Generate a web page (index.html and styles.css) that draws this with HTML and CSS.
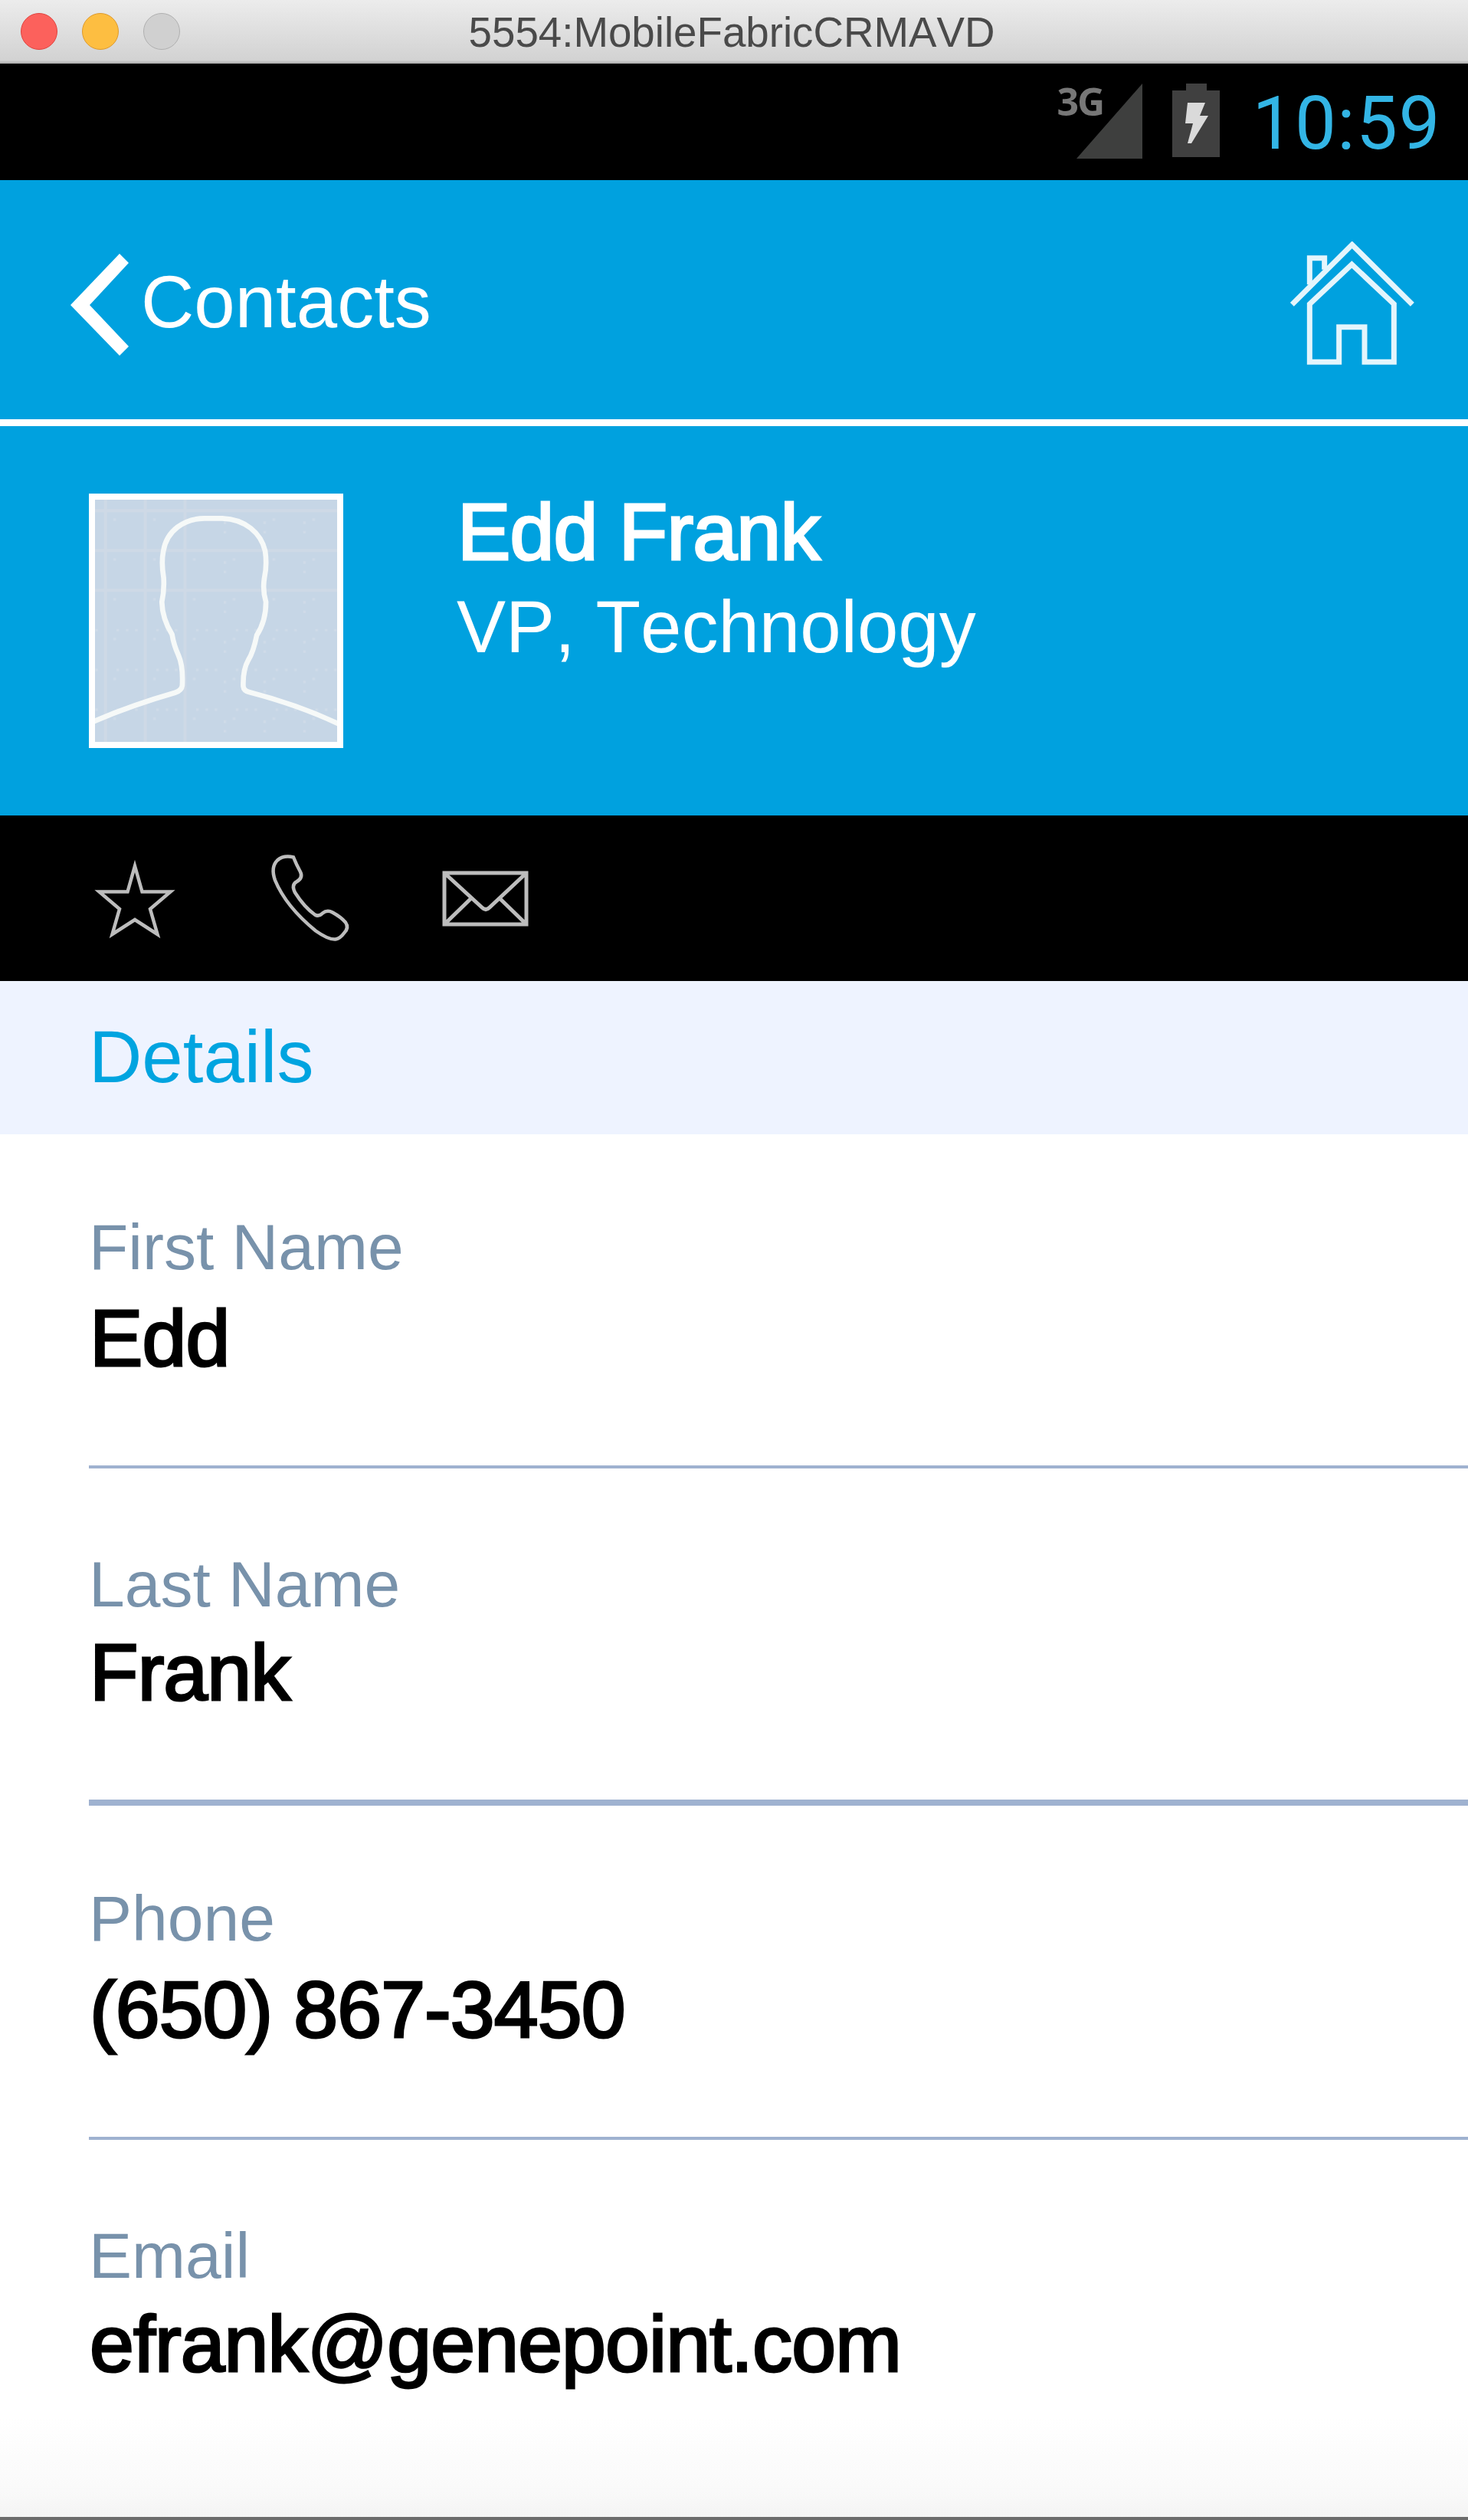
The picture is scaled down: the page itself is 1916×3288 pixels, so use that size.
FILE: index.html
```html
<!DOCTYPE html>
<html lang="en">
<head>
<meta charset="utf-8">
<title>Contacts</title>
<link rel="stylesheet" href="styles.css">
</head>
<body>
<div class="window">
  <header class="titlebar">
    <div class="lights">
      <span class="light close"></span>
      <span class="light minimize"></span>
      <span class="light zoom"></span>
    </div>
    <div class="window-title">5554:MobileFabricCRMAVD</div>
  </header>

  <div class="statusbar">
    <div class="network">
      <span class="network-type">3G</span>
      <svg class="signal" viewBox="0 0 86 98"><path d="M0 98L86 0V98Z" fill="#3e3f3e"/></svg>
    </div>
    <svg class="battery" viewBox="0 0 62 96">
      <path d="M18 0H45V9H62V96H0V9H18Z" fill="#404040"/>
      <path d="M20 25H43L36 42H47L25 78H20L27 52H17Z" fill="#dadada"/>
    </svg>
    <div class="clock">10:59</div>
  </div>

  <nav class="navbar">
    <a class="back">
      <svg class="chevron" viewBox="0 0 76 134"><path d="M0 67L64 0L76 12L25 67L76 121L64 133Z" fill="#fff"/></svg>
      <span class="back-label">Contacts</span>
    </a>
    <svg class="home" viewBox="130 105 486 486" fill="none" stroke="#e4f5fc" stroke-width="21">
      <path d="M137 352L372 118L608 352"/>
      <path d="M206 274V170H264V215"/>
      <path d="M206 577V350L371 195L536 350V577H421V440H321V577Z"/>
    </svg>
  </nav>

  <section class="profile">
    <svg class="avatar" viewBox="101 94 949 949">
      <defs>
        <pattern id="dots" x="100" y="94" width="156" height="156" patternUnits="userSpaceOnUse">
          <path d="M73 73h10v10h-10z" fill="#cfdbe8"/>
        </pattern>
        <pattern id="columns" x="605" y="94" width="156" height="156" patternUnits="userSpaceOnUse">
          <path d="M0 85h10v10h-10zM0 122h10v10h-10z" fill="#cfdbe8"/>
        </pattern>
        <pattern id="rows" x="185" y="600" width="156" height="156" patternUnits="userSpaceOnUse">
          <path d="M0 0h10v10h-10zM37 0h10v10h-10zM73 0h10v10h-10z" fill="#cfdbe8"/>
        </pattern>
      </defs>
      <rect x="100" y="94" width="950" height="950" fill="#c6d6e6"/>
      <path d="M100 137H1050M100 293H1050M100 449H1050M142 94V1043M298 94V1043M454 94V1043" stroke="#ced9e6" stroke-width="12"/>
      <rect x="100" y="94" width="950" height="950" fill="url(#dots)"/>
      <rect x="605" y="94" width="445" height="950" fill="url(#columns)"/>
      <rect x="100" y="600" width="950" height="400" fill="url(#rows)"/>
      <path d="M95 963C200 918 310 880 415 850Q441 842 443 822Q447 745 428 703Q410 665 403 622Q365 560 363 495Q373 450 370 400Q360 340 369 295C382 215 450 168 530 167H600C690 170 752 225 768 295Q776 350 765 400Q757 450 771 495Q771 570 735 625Q722 690 702 722Q680 760 682 825Q684 843 705 848C820 878 940 918 1055 972" fill="none" stroke="#f6f9f8" stroke-width="20"/>
    </svg>
    <div class="identity">
      <div class="full-name">Edd Frank</div>
      <div class="job">VP, Technology</div>
    </div>
  </section>

  <div class="actions">
    <svg viewBox="0 0 600 216" fill="none" stroke="#bdbdbd" stroke-width="4.5">
      <path d="M60 66L69.500 99.500H106.500L80 122L89.500 155L60 136L30.500 155L40 122L13.500 99.500H50.500Z"/>
      <path d="M267 54.500Q271 64.500 276 73.500Q280 81.500 271 86.500Q264 90.500 269 100.500Q281 119.500 295 129.500Q300 132.500 305 127.500Q311 122.500 318 126.500Q329 132.500 335 139.500Q340 146.500 333 153.500Q328 160.500 322 161.500Q313 162.500 296 150.500Q257 118.500 243 84.500Q237 67.500 246 58.500Q254 51.500 267 54.500Z"/>
      <path d="M464 75H571V142H464ZM464 75L513 120Q518 125 523 120L571 75M464 142L499 108M536 108L571 142" stroke-width="5"/>
    </svg>
  </div>

  <h2 class="section-heading">Details</h2>

  <dl class="fields">
    <div class="field">
      <dt>First Name</dt>
      <dd>Edd</dd>
    </div>
    <div class="field thick">
      <dt>Last Name</dt>
      <dd>Frank</dd>
    </div>
    <div class="field">
      <dt>Phone</dt>
      <dd>(650) 867-3450</dd>
    </div>
    <div class="field last">
      <dt>Email</dt>
      <dd>efrank@genepoint.com</dd>
    </div>
  </dl>
</div>
</body>
</html>
```
FILE: styles.css
```css
* {
  box-sizing: border-box;
}

body {
  margin: 0;
  background: #fff;
  font-family: "Liberation Sans", Arial, sans-serif;
  font-kerning: none;
}

.window {
  display: flex;
  flex-direction: column;
  width: 1916px;
  height: 3288px;
  overflow: hidden;
  border-bottom: 4px solid #6c6c6c;
}

svg {
  display: block;
  flex: none;
}

.titlebar {
  display: grid;
  grid-template-columns: 1fr auto 1fr;
  align-items: center;
  height: 83px;
  padding: 0 6px 3px 0;
  background: linear-gradient(#ececec, #d2d2d2 79px, #aaa 83px);
}

.lights {
  display: flex;
  gap: 32px;
  padding-left: 27px;
}

.light {
  width: 48px;
  height: 48px;
  border: 1.5px solid;
  border-radius: 50%;
}

.close {
  background: #fc615c;
  border-color: #e0443f;
}

.minimize {
  background: #fdbe41;
  border-color: #de9a2c;
}

.zoom {
  background: #d0d0d0;
  border-color: #b0b0b0;
}

.window-title {
  padding-top: 2px;
  color: #4a4a4a;
  font-size: 54.700px;
  line-height: 80px;
}

.statusbar {
  display: flex;
  align-items: flex-start;
  justify-content: flex-end;
  height: 152px;
  padding: 26px 35px 0 0;
  background: #000;
}

.network {
  display: flex;
  align-items: flex-start;
  margin-right: 39px;
}

.network-type {
  width: 60px;
  margin-right: -34px;
  color: #777;
  font: bold 50px/46px "Open Sans", sans-serif;
  letter-spacing: -2px;
}

.signal {
  width: 86px;
  height: 98px;
}

.battery {
  width: 62px;
  height: 96px;
  margin-right: 42px;
}

.clock {
  padding-top: 2px;
  color: #33b5e5;
  font: 96px/100px Roboto, sans-serif;
  letter-spacing: 1.5px;
}

.navbar {
  display: flex;
  align-items: flex-start;
  justify-content: space-between;
  height: 321px;
  padding: 80px 70px 0 92px;
  background: #00a1df;
  border-bottom: 9px solid #fff;
}

.back {
  display: flex;
  color: #fff;
}

.chevron {
  width: 76px;
  height: 134px;
  margin: 16px 16px 0 0;
}

.back-label {
  font-size: 96px;
  line-height: 158px;
}

.home {
  width: 162px;
  height: 162px;
}

.profile {
  display: flex;
  gap: 148px;
  height: 508px;
  padding: 88px 0 0 116px;
  background: #00a1df;
  color: #fff;
}

.avatar {
  width: 332px;
  height: 332px;
  border: 8px solid #fff;
}

.full-name {
  margin: -2px 0 0 1px;
  font-size: 104px;
  line-height: 104px;
  letter-spacing: -0.8px;
  -webkit-text-stroke: 3px #fff;
}

.job {
  margin-top: 22px;
  font-size: 96px;
  line-height: 100px;
}

.actions {
  height: 216px;
  padding-left: 116px;
  background: #000;
}

.actions svg {
  width: 600px;
  height: 216px;
}

.section-heading {
  height: 200px;
  margin: 0;
  padding-left: 116px;
  background: #eef3ff;
  color: #00a4e0;
  font-size: 96px;
  font-weight: 400;
  line-height: 198px;
}

.fields {
  flex: 1;
  margin: 0;
  padding-left: 116px;
  background: linear-gradient(#fff calc(100% - 130px), #fafafa calc(100% - 40px), #f4f4f4);
}

.field {
  height: 436px;
  padding-top: 99px;
  border-bottom: 4px solid #9fb2d0;
}

.field:nth-child(even) {
  padding-top: 103px;
}

.field.thick {
  height: 440px;
  border-bottom-width: 8px;
}

.field.last {
  border-bottom: 0;
}

.field dt {
  color: #7892ab;
  font-size: 84px;
  line-height: 96px;
}

.field dd {
  margin: 11px 0 0 1px;
  color: #000;
  font-size: 104px;
  line-height: 120px;
  letter-spacing: -0.9px;
  -webkit-text-stroke: 3px #000;
}

.field:nth-child(even) dd {
  margin-top: 7px;
}
```
